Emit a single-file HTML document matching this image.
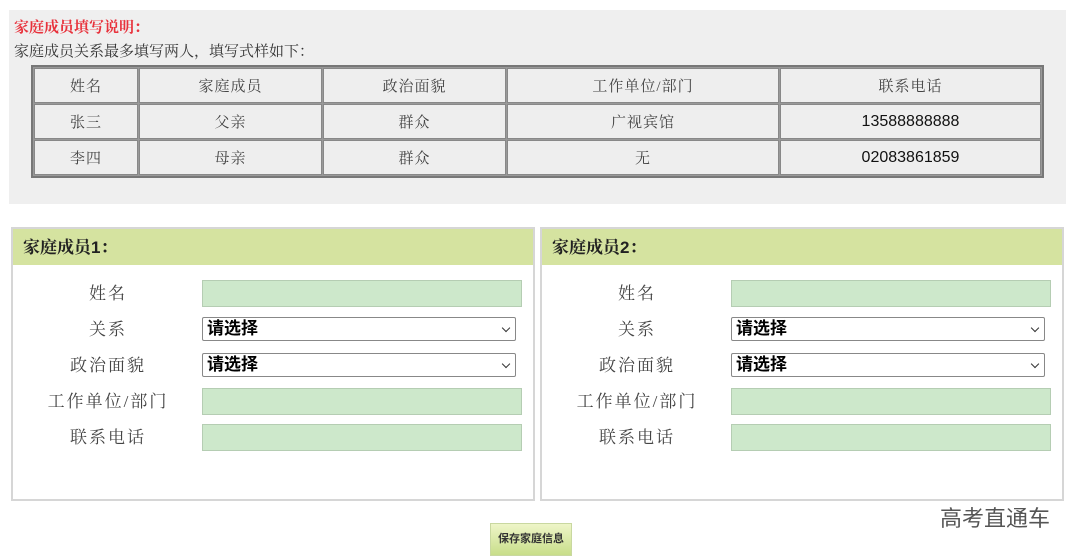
<!DOCTYPE html>
<html><head><meta charset="utf-8"><style>
*{margin:0;padding:0;box-sizing:border-box}
body{width:1080px;height:557px;background:#fff;position:relative;overflow:hidden;font-family:"Liberation Serif","Noto Serif CJK SC",serif;color:#333}
.gray{position:absolute;left:9px;top:10px;width:1057px;height:194px;background:#efefef}
.t1{position:absolute;left:14px;top:16px;font-size:15px;color:#e8323c;font-weight:bold}
.t2{position:absolute;left:14px;top:40px;font-size:15px;color:#333}
table{position:absolute;left:31px;top:65px;width:1013px;border-collapse:separate;border-spacing:1px;border:2px solid #777;background:#999}
td{background:#eee;border:1px solid #888;text-align:center;font-size:15px;height:35px;color:#444;letter-spacing:1px}
td.n{font-family:"Liberation Sans",sans-serif;font-size:16px;color:#111;letter-spacing:0}
.p{position:absolute;top:227px;width:524px;height:274px;border:2px solid #d6d6d6;background:#fff}
.h{height:36px;background:#d5e3a0;font-size:17px;padding:4px 10px;color:#222;font-weight:bold}
.h b{font-family:"Liberation Sans",sans-serif}
.lab{position:absolute;width:190px;text-align:center;font-size:17px;color:#444;letter-spacing:2px}
.in{position:absolute;left:189px;width:320px;height:27px;background:#cde8cb;border:1px solid #b5cdb3}
.sel{position:absolute;left:189px;width:314px;height:24px;background:#fff;border:1px solid #888;border-radius:2px;font-family:"Liberation Sans","Noto Sans CJK SC",sans-serif;font-size:17px;color:#000;padding:0 4px;line-height:22px;font-weight:bold}
.sel:after{content:"";position:absolute;right:6px;top:7px;width:5px;height:5px;border-right:1.5px solid #333;border-bottom:1.5px solid #333;transform:rotate(45deg)}
.btn{position:absolute;left:490px;top:523px;width:82px;height:33px;background:linear-gradient(#eef5c8,#c8de8a);border:1px solid #c9d8a0;font-family:"Liberation Sans","Noto Sans CJK SC",sans-serif;font-size:11px;text-align:center;line-height:31px;color:#333;font-weight:bold}
.wm{position:absolute;left:940px;top:501px;font-family:"Liberation Sans","Noto Sans CJK SC",sans-serif;font-size:22px;color:#555}
</style></head><body>
<div class="gray"></div>
<div class="t1">家庭成员填写说明：</div>
<div class="t2">家庭成员关系最多填写两人，填写式样如下：</div>
<table>
<tr><td style="width:104px">姓名</td><td style="width:183px">家庭成员</td><td style="width:183px">政治面貌</td><td style="width:272px">工作单位/部门</td><td>联系电话</td></tr>
<tr><td>张三</td><td>父亲</td><td>群众</td><td>广视宾馆</td><td class="n">13588888888</td></tr>
<tr><td>李四</td><td>母亲</td><td>群众</td><td>无</td><td class="n">02083861859</td></tr>
</table>
<div class="p" style="left:11px">
<div class="h">家庭成员<b>1</b>：</div>
<div class="lab" style="left:0;top:50px">姓名</div><div class="in" style="top:51px"></div>
<div class="lab" style="left:0;top:86px">关系</div><div class="sel" style="top:88px">请选择</div>
<div class="lab" style="left:0;top:122px">政治面貌</div><div class="sel" style="top:124px">请选择</div>
<div class="lab" style="left:0;top:158px">工作单位/部门</div><div class="in" style="top:159px"></div>
<div class="lab" style="left:0;top:194px">联系电话</div><div class="in" style="top:195px"></div>
</div>
<div class="p" style="left:540px">
<div class="h">家庭成员<b>2</b>：</div>
<div class="lab" style="left:0;top:50px">姓名</div><div class="in" style="top:51px"></div>
<div class="lab" style="left:0;top:86px">关系</div><div class="sel" style="top:88px">请选择</div>
<div class="lab" style="left:0;top:122px">政治面貌</div><div class="sel" style="top:124px">请选择</div>
<div class="lab" style="left:0;top:158px">工作单位/部门</div><div class="in" style="top:159px"></div>
<div class="lab" style="left:0;top:194px">联系电话</div><div class="in" style="top:195px"></div>
</div>
<div class="btn">保存家庭信息</div>
<div class="wm">高考直通车</div>
</body></html>
